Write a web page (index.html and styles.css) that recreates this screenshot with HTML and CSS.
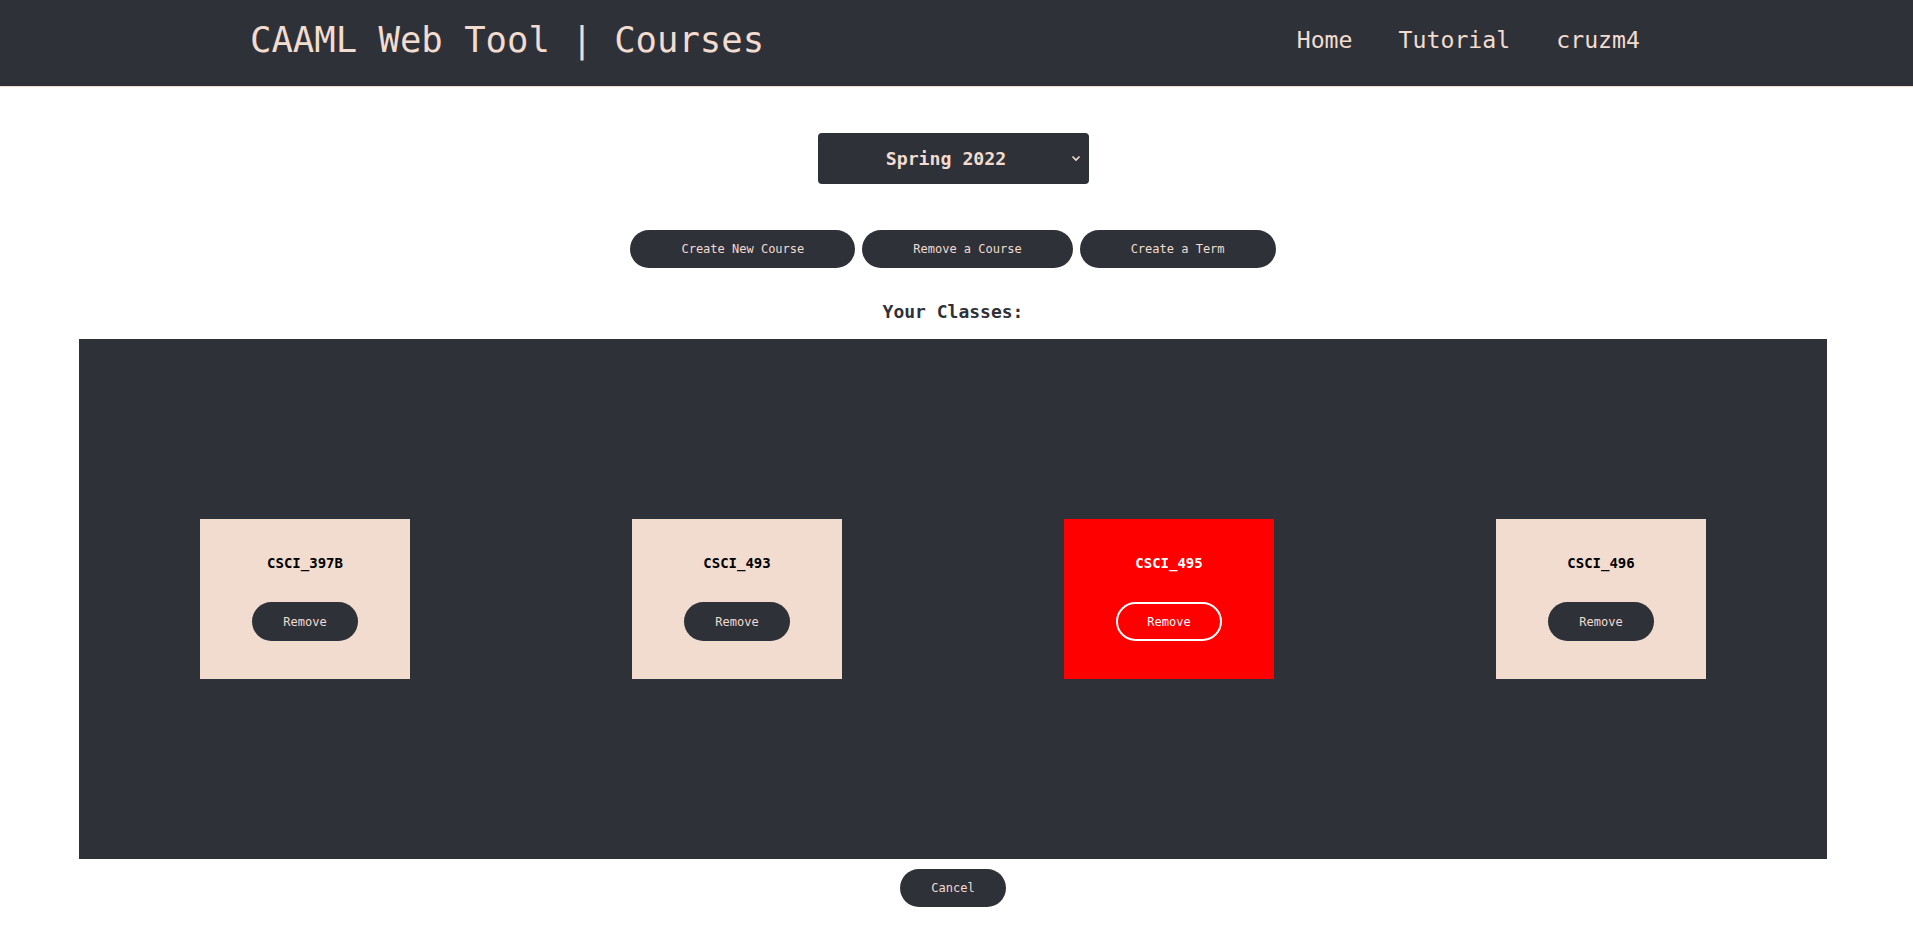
FILE: index.html
```html
<!DOCTYPE html>
<html lang="en">
<head>
<meta charset="utf-8">
<title>CAAML Web Tool | Courses</title>
<link rel="stylesheet" href="styles.css">
</head>
<body>
<header class="topbar">
  <div class="brand">CAAML Web Tool | Courses</div>
  <nav class="nav">
    <a class="nav-link" href="#">Home</a>
    <a class="nav-link" href="#">Tutorial</a>
    <a class="nav-link" href="#">cruzm4</a>
  </nav>
</header>
<main class="main">
  <div class="term-select">
    <select class="term">
      <option>Spring 2022</option>
    </select>
    <svg class="chevron" width="10" height="7" viewBox="0 0 10 7"><path d="M1.5 1.5 L5 5 L8.5 1.5" fill="none" stroke="#f2dcd0" stroke-width="1.6"/></svg>
  </div>
  <div class="actions">
    <button class="pill action">Create New Course</button>
    <button class="pill action">Remove a Course</button>
    <button class="pill action">Create a Term</button>
  </div>
  <h3 class="heading">Your Classes:</h3>
  <section class="classes">
    <div class="card">
      <div class="card-title">CSCI_397B</div>
      <button class="pill remove">Remove</button>
    </div>
    <div class="card">
      <div class="card-title">CSCI_493</div>
      <button class="pill remove">Remove</button>
    </div>
    <div class="card card-active">
      <div class="card-title">CSCI_495</div>
      <button class="pill remove">Remove</button>
    </div>
    <div class="card">
      <div class="card-title">CSCI_496</div>
      <button class="pill remove">Remove</button>
    </div>
  </section>
  <button class="pill cancel">Cancel</button>
</main>
</body>
</html>
```
FILE: styles.css
```css
* { box-sizing: border-box; }
html, body { margin: 0; padding: 0; background: #ffffff; }
body { font-family: "DejaVu Sans Mono", "Liberation Mono", monospace; color: #2f3139; }

.topbar {
  height: 87px;
  background: #2f3139;
  border-bottom: 1px solid #f2dcd0;
  display: flex;
  align-items: center;
  justify-content: space-between;
  padding: 0 273px 7px 250px;
}
.brand { color: #f2dcd0; font-size: 35.6px; line-height: 42px; white-space: nowrap; }
.nav { display: flex; gap: 46px; }
.nav-link { color: #f2dcd0; font-size: 23.2px; line-height: 28px; text-decoration: none; }

.main {
  display: flex;
  flex-direction: column;
  align-items: center;
  padding: 46px 7px 10px 0;
}

.term-select { position: relative; width: 271px; height: 51px; }
.term {
  appearance: none;
  -webkit-appearance: none;
  width: 100%;
  height: 100%;
  border: none;
  border-radius: 4px;
  background: #2f3139;
  color: #f2dcd0;
  font-family: "DejaVu Sans Mono", "Liberation Mono", monospace;
  font-weight: bold;
  font-size: 18.2px;
  text-align: center;
  text-align-last: center;
  padding: 0 14px 0 0;
}
.chevron { position: absolute; right: 8px; top: 22px; pointer-events: none; }

.actions { display: flex; gap: 7px; margin-top: 46px; }

.pill {
  border: none;
  border-radius: 20px;
  background: #2f3139;
  color: #f2dcd0;
  font-family: "DejaVu Sans Mono", "Liberation Mono", monospace;
  font-size: 12px;
  height: 39px;
  cursor: pointer;
}
.action { padding: 0 51px; height: 38px; }

.heading {
  margin: 33px 0 17px;
  font-size: 18px;
  line-height: 21px;
  font-weight: bold;
  color: #2f3139;
}

.classes {
  align-self: stretch;
  margin: 0 0 0 79px;
  width: 1748px;
  height: 520px;
  background: #2f3139;
  display: flex;
  align-items: center;
  justify-content: space-around;
  padding: 0 10px;
}

.card {
  width: 210px;
  height: 160px;
  background: #f2dcd0;
  display: flex;
  flex-direction: column;
  align-items: center;
  padding-top: 36px;
  gap: 30px;
}
.card-title { font-size: 14px; line-height: 17px; font-weight: bold; color: #000000; }
.remove { width: 106px; padding: 0; }

.card-active { background: #ff0000; }
.card-active .card-title { color: #ffffff; }
.card-active .remove { background: transparent; border: 2px solid #ffffff; color: #ffffff; }

.cancel { width: 106px; height: 38px; margin-top: 10px; padding: 0; }
```
